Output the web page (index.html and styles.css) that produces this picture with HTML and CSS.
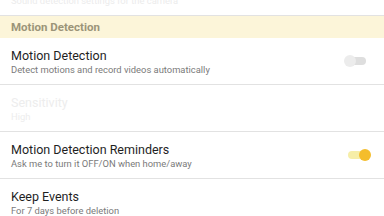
FILE: index.html
```html
<!DOCTYPE html>
<html>
<head>
<meta charset="utf-8">
<link rel="stylesheet" href="styles.css">
</head>
<body>
<div class="list">
  <div class="cut-row"><div class="cut-text">Sound detection settings for the camera</div></div>
  <div class="section">Motion Detection</div>
  <div class="row">
    <div class="texts">
      <div class="title">Motion Detection</div>
      <div class="sub">Detect motions and record videos automatically</div>
    </div>
    <div class="toggle off"><span class="track"></span><span class="knob"></span></div>
  </div>
  <div class="row disabled">
    <div class="texts">
      <div class="title">Sensitivity</div>
      <div class="sub">High</div>
    </div>
  </div>
  <div class="row">
    <div class="texts">
      <div class="title">Motion Detection Reminders</div>
      <div class="sub">Ask me to turn it OFF/ON when home/away</div>
    </div>
    <div class="toggle on"><span class="track"></span><span class="knob"></span></div>
  </div>
  <div class="row last">
    <div class="texts">
      <div class="title">Keep Events</div>
      <div class="sub">For 7 days before deletion</div>
    </div>
  </div>
</div>
</body>
</html>
```
FILE: styles.css
```css
html, body {
  margin: 0;
  padding: 0;
  background: #ffffff;
  font-family: Roboto, "Liberation Sans", sans-serif;
  overflow: hidden;
}
.list {
  width: 384px;
  height: 216px;
  overflow: hidden;
  display: flex;
  flex-direction: column;
}
.cut-row {
  height: 15px;
  flex: none;
  overflow: hidden;
  border-bottom: 1px solid #e2e2e2;
  padding-left: 11px;
}
.cut-text {
  margin-top: -5px;
  font-size: 9.4px;
  line-height: 11px;
  color: #ececec;
}
.section {
  flex: none;
  height: 22px;
  background: #fcf5d9;
  color: #9b9478;
  font-size: 11.5px;
  font-weight: 700;
  line-height: 23px;
  padding-left: 11px;
}
.row {
  flex: none;
  height: 46px;
  display: flex;
  align-items: center;
  justify-content: space-between;
  padding: 0 11px;
  border-bottom: 1px solid #e2e2e2;
}
.row.last {
  border-bottom: none;
}
.texts {
  display: flex;
  flex-direction: column;
  gap: 1px;
  margin-top: 1px;
}
.title {
  font-size: 12.5px;
  line-height: 15px;
  color: #1f1f1f;
}
.sub {
  font-size: 9.4px;
  line-height: 12px;
  color: #7a7a7a;
}
.disabled .title,
.disabled .sub {
  color: #ededed;
}
.toggle {
  position: relative;
  width: 28px;
  height: 14px;
  margin-right: 1px;
}
.toggle .track {
  position: absolute;
  top: 3px;
  height: 8px;
  border-radius: 4px;
}
.toggle .knob {
  position: absolute;
  top: 1px;
  width: 12px;
  height: 12px;
  border-radius: 50%;
}
.toggle.off .track { background: #dedede; left: 4px; right: 6px; }
.toggle.off .knob { left: 0; background: #ececec; }
.toggle.on .track { background: #f6eea8; left: 4px; right: 6px; }
.toggle.on .knob { right: 1px; background: #f4bd2c; }
```
